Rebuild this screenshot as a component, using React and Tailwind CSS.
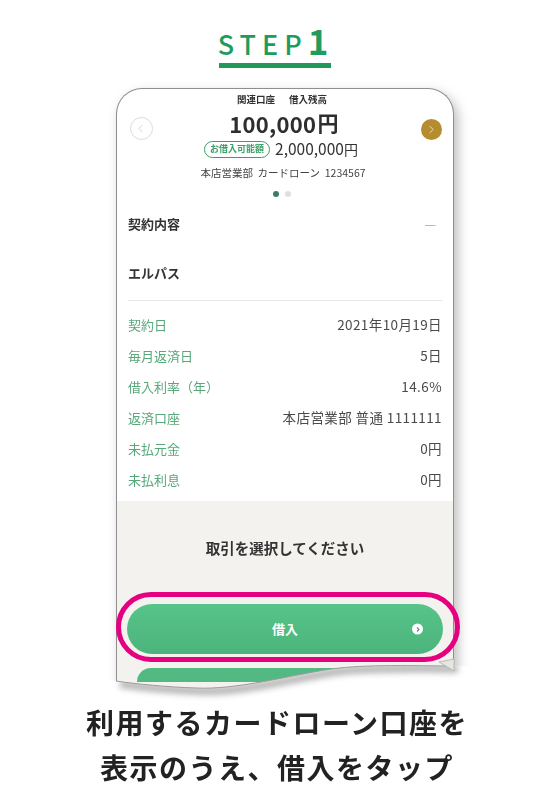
import React from 'react';
import { ChevronLeft, ChevronRight } from 'lucide-react';

const rows = [
  ['契約日', '2021年10月19日'],
  ['毎月返済日', '5日'],
  ['借入利率（年）', '14.6%'],
  ['返済口座', '本店営業部 普通 1111111'],
  ['未払元金', '0円'],
  ['未払利息', '0円'],
];

const jp = "font-['Noto_Sans_CJK_JP','Noto_Sans',sans-serif]";

const curve = 'M338 578C300 578 250 576 215 581C170 588 120 602 80 600C50 599 20 596 0 593';
const below = 'M-8 593L0 593C20 596 50 599 80 600C120 602 170 588 215 581C250 576 300 578 338 578L356 578L356 628L-8 628Z';

// torn / curled bottom of the phone page
const CurlEdge = () => (
  <svg className="absolute left-[-8px] top-[560px] pointer-events-none" width="364" height="68" viewBox="-8 560 364 68">
    <defs>
      <clipPath id="belowCurve">
        <path d={below} />
      </clipPath>
      <filter id="soft" x="-20%" y="-200%" width="140%" height="500%">
        <feGaussianBlur stdDeviation="3" />
      </filter>
    </defs>
    <path d={below} fill="#ffffff" />
    <g clipPath="url(#belowCurve)">
      <path d={curve} transform="translate(4 3)" fill="none" stroke="rgba(0,0,0,0.32)" strokeWidth="7" filter="url(#soft)" />
    </g>
    <path d={curve} fill="none" stroke="#9a9a9a" strokeWidth="1" />
    <polygon points="323,574 338,571 338,583" fill="#e7e5e1" stroke="#b0b0b0" strokeWidth="0.8" />
  </svg>
);

const PhoneCard = () => {
  return (
    <div className="relative ml-[116px] w-[338px] h-[602px]">
      <div className="[filter:drop-shadow(4px_5px_6px_rgba(0,0,0,0.26))]">
        <div className="h-[602px] bg-white border-[1.5px] border-b-0 border-[#8f8f8f] rounded-t-[26px] overflow-hidden flex flex-col">
          {/* account header */}
          <div className="grid grid-cols-[48px_1fr_48px]">
            <div className="flex justify-center pt-[28px]">
              <div className="w-[23px] h-[23px] rounded-full border-[1.5px] border-[#dcdcdc] flex items-center justify-center">
                <ChevronLeft size={13} strokeWidth={1.6} className="text-[#cfcfcf] -ml-px" />
              </div>
            </div>
            <div className="flex flex-col items-center">
              <div className="h-[20px] flex items-center gap-[14px] text-[9.5px] font-bold text-[#333] -ml-[6px]">
                <span>関連口座</span>
                <span>借入残高</span>
              </div>
              <div className="h-[28px] flex items-center text-[22px] font-bold text-[#2e2e2e] tracking-[0.3px] -ml-[2px]">
                100,000<span className="text-[21px] ml-[1px]">円</span>
              </div>
              <div className="h-[24px] flex items-center gap-[5px] -ml-[8px]">
                <span className="h-[17px] px-[5px] rounded-full border border-[#3d9e66] text-[#3d9e66] text-[9px] font-bold flex items-center">お借入可能額</span>
                <span className="text-[15.5px] text-[#333]">2,000,000<span className="text-[14px]">円</span></span>
              </div>
              <div className="h-[24px] flex items-center text-[10.5px] text-[#444] -ml-[4px]">本店営業部&nbsp;&nbsp;カードローン&nbsp;&nbsp;1234567</div>
              <div className="h-[18px] flex items-center gap-[6px] -ml-[6px]">
                <span className="w-[6px] h-[6px] rounded-full bg-[#3f7a68]" />
                <span className="w-[6px] h-[6px] rounded-full bg-[#dedede]" />
              </div>
            </div>
            <div className="flex justify-center pt-[30px]">
              <div className="w-[21px] h-[21px] rounded-full bg-[#b58c2e] flex items-center justify-center ml-[4px]">
                <ChevronRight size={13} strokeWidth={1.6} className="text-[#f3e6c4] ml-px" />
              </div>
            </div>
          </div>

          {/* contract */}
          <div className="px-[11px]">
            <div className="h-[42px] flex items-center justify-between text-[13px] font-bold text-[#333]">
              <span>契約内容</span>
              <span className="text-[#aaa] font-normal mr-[6px]">—</span>
            </div>
            <div className="h-[56px] flex items-center text-[13px] font-bold text-[#333] border-b border-[#e6e6e6]">エルパス</div>
            <div className="pt-[8px] pb-[6px]">
              {rows.map(([label, value]) => (
                <div key={label} className="h-[31px] flex items-center justify-between">
                  <span className="text-[13px] text-[#58a87a]">{label}</span>
                  <span className="text-[13.5px] tracking-[0.4px] text-[#4a4a4a]">{value}</span>
                </div>
              ))}
            </div>
          </div>

          {/* select area */}
          <div className="flex-1 bg-[#f3f2ef] flex flex-col">
            <div className="h-[94px] flex items-center justify-center text-[14.5px] font-bold text-[#333]">取引を選択してください</div>
            <div className="mt-[9px] mx-[10px] h-[50px] rounded-full bg-linear-to-b from-[#58c489] to-[#4bb47c] relative flex items-center justify-center">
              <span className="text-white text-[13px] font-bold">借入</span>
              <span className="absolute right-[20px] top-1/2 -translate-y-1/2 w-[11px] h-[11px] rounded-full bg-white flex items-center justify-center">
                <svg width="6" height="6" viewBox="0 0 6 6"><path d="M2 1L4 3L2 5" fill="none" stroke="#6a8a7a" strokeWidth="1.2" /></svg>
              </span>
            </div>
            <div className="mt-[14px] mx-[20px] h-[14px] rounded-t-full bg-[#52b983]" />
          </div>
        </div>
      </div>

      <CurlEdge />

      {/* highlight ring */}
      <div className="absolute left-0 top-[504px] w-[344px] h-[70px] rounded-full border-[5px] border-[#e4007f] pointer-events-none" />
    </div>
  );
};

export default function App() {
  return (
    <div className={`w-[550px] h-[802px] bg-white overflow-hidden ${jp}`}>
      <div className="h-[88px] flex flex-col items-center pt-[22px]">
        <div className="flex items-end leading-none text-[#1f9c5d] ml-[-4px]">
          <span className="text-[27px] font-medium tracking-[6px]">STEP</span>
          <span className="text-[35px] font-semibold">1</span>
        </div>
        <div className="mt-[6px] w-[112px] h-[5px] bg-[#22995a]" />
      </div>
      <PhoneCard />
      <div className="relative mt-[10px] flex flex-col items-center text-[28px] font-bold text-[#222] leading-[45px] tracking-[1.5px]">
        <div className="ml-[4px]">利用するカードローン口座を</div>
        <div className="ml-[4px]">表示のうえ、借入をタップ</div>
      </div>
    </div>
  );
}
